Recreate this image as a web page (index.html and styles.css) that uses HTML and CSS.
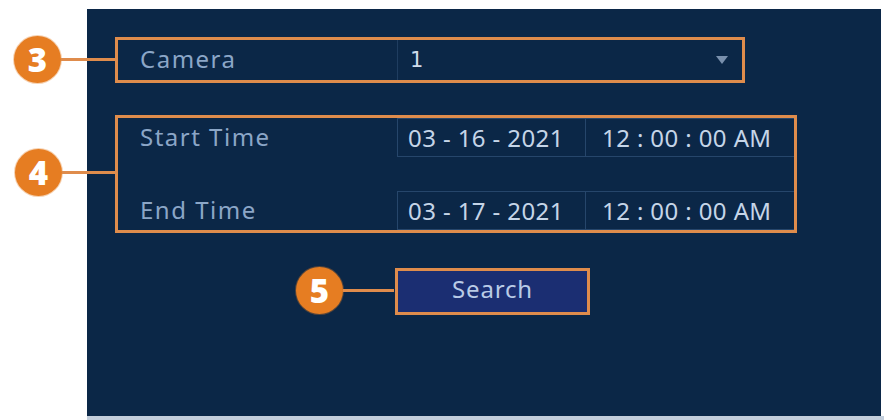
FILE: index.html
```html
<!DOCTYPE html>
<html>
<head>
<meta charset="utf-8">
<link rel="stylesheet" href="styles.css">
</head>
<body>
<div class="page">
  <div class="panel">
    <div class="hl hl-camera">
      <div class="row camera-row">
        <span class="label">Camera</span>
        <div class="select">
          <span class="value">1</span>
          <span class="caret"></span>
        </div>
      </div>
    </div>

    <div class="hl hl-time">
      <div class="row time-row">
        <span class="label">Start Time</span>
        <div class="dt">
          <span class="date">03 - 16 - 2021</span>
          <span class="time">12 : 00 : 00 AM</span>
        </div>
      </div>
      <div class="row time-row">
        <span class="label">End Time</span>
        <div class="dt">
          <span class="date">03 - 17 - 2021</span>
          <span class="time">12 : 00 : 00 AM</span>
        </div>
      </div>
    </div>

    <div class="actions">
      <button class="search">Search</button>
    </div>
  </div>

  <div class="callout c3"><span class="num">3</span><span class="lead"></span></div>
  <div class="callout c4"><span class="num">4</span><span class="lead"></span></div>
  <div class="callout c5"><span class="num">5</span><span class="lead"></span></div>

  <div class="base-strip"></div>
</div>
</body>
</html>
```

FILE: styles.css
```css
* { box-sizing: border-box; }

html, body {
  margin: 0;
  padding: 0;
  background: #ffffff;
}

body {
  width: 884px;
  height: 420px;
  overflow: hidden;
  font-family: "Noto Sans", "Open Sans", sans-serif;
}

.page {
  position: relative;
  width: 884px;
  height: 420px;
  padding: 9px 3px 0 87px;
}

.panel {
  height: 407px;
  background: #0b2747;
  padding: 28px 0 0 28px;
  display: flex;
  flex-direction: column;
}

/* orange highlight frames */
.hl {
  border: 3px solid #df8c4c;
}

.hl-camera {
  width: 630px;
  height: 46px;
}

.hl-time {
  width: 682px;
  height: 118px;
  margin-top: 32px;
  display: flex;
  flex-direction: column;
  justify-content: space-between;
}

.row {
  display: flex;
  align-items: center;
}

.label {
  width: 279px;
  padding-left: 22px;
  padding-bottom: 3px;
  color: #8ba6c7;
  font-size: 24px;
  letter-spacing: 1.5px;
}

.camera-row {
  height: 100%;
}

.select {
  flex: 1;
  height: 100%;
  border-left: 1px solid #1f3d60;
  display: flex;
  align-items: center;
  justify-content: space-between;
  padding: 0 14px 0 12px;
}

.value {
  color: #cfdcec;
  font-size: 21px;
  font-family: "DejaVu Sans", sans-serif;
}

.caret {
  width: 0;
  height: 0;
  border-left: 6px solid transparent;
  border-right: 6px solid transparent;
  border-top: 8px solid #7990ad;
}

.time-row {
  height: 39px;
}

.dt {
  flex: 1;
  height: 100%;
  display: flex;
  border: 1px solid #26466b;
  border-right: none;
}

.date, .time {
  display: flex;
  align-items: center;
  color: #c5d5e8;
  font-size: 24px;
  white-space: pre;
  letter-spacing: 0.4px;
}

.date {
  width: 188px;
  padding-left: 10px;
  border-right: 1px solid #26466b;
}

.time {
  flex: 1;
  padding-left: 16px;
}

.actions {
  margin-top: 35px;
  padding-left: 280px;
}

.search {
  width: 195px;
  height: 47px;
  border: 3px solid #df8c4c;
  background: #1b2e72;
  color: #b9cbe6;
  font-family: "Noto Sans", "Open Sans", sans-serif;
  font-size: 24px;
  letter-spacing: 0.8px;
  line-height: 1;
  padding: 0 0 5px;
}

/* numbered call-outs laid over the form */
.callout {
  position: absolute;
  display: flex;
  align-items: center;
}

.num {
  width: 47px;
  height: 47px;
  border-radius: 50%;
  background: #e67d22;
  color: #ffffff;
  font-family: "Open Sans", "Noto Sans", sans-serif;
  font-weight: 800;
  font-size: 33px;
  display: flex;
  align-items: center;
  justify-content: center;
  box-shadow: 0 0 0 1px rgba(230, 125, 34, 0.35);
}

.lead {
  height: 3px;
  background: #df8c4c;
}

.c3 { left: 14px; top: 36px; }
.c3 .lead { width: 54px; }

.c4 { left: 15px; top: 149px; }
.c4 .lead { width: 53px; }

.c5 { left: 296px; top: 267px; }
.c5 .lead { width: 51px; }

.base-strip {
  position: absolute;
  left: 87px;
  right: 0;
  bottom: 0;
  height: 4px;
  background: #c3cedb;
}
```
